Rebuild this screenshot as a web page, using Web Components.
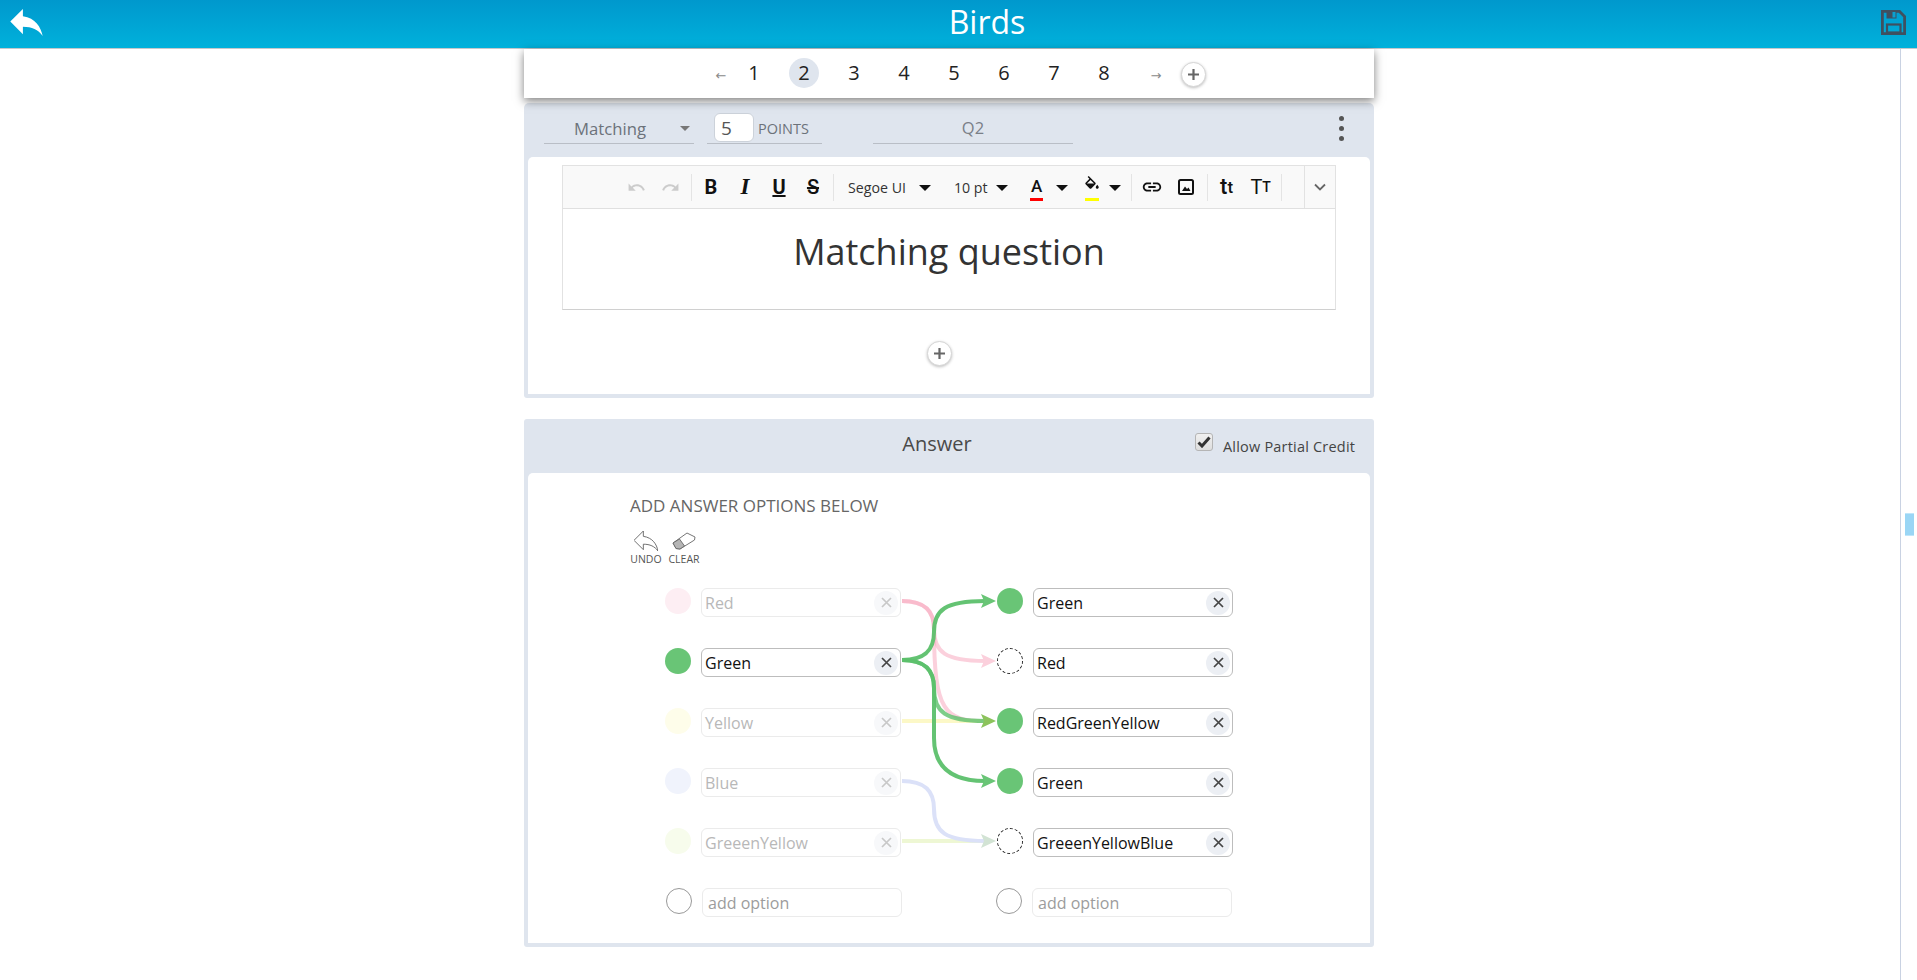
<!DOCTYPE html>
<html>
<head>
<meta charset="utf-8">
<title>Birds</title>
<style>
  html, body { margin: 0; height: 100%; overflow: hidden; background: #fff; font-family: "Open Sans", "Liberation Sans", sans-serif; }
  app-shell { height: 980px; }
</style>
</head>
<body>
<app-shell>
  <span slot="title">Birds</span>
  <page-nav></page-nav>
  <question-panel>
    <rich-toolbar></rich-toolbar>
  </question-panel>
  <answer-panel>
    <match-board></match-board>
  </answer-panel>
</app-shell>

<script>
const reply = 'M10 9V5l-7 7 7 7v-4.1c5 0 8.5 1.6 11 5.1-1-5-4-10-11-11z';

class AppShell extends HTMLElement {
  connectedCallback() {
    this.attachShadow({ mode: 'open' });
    this.shadowRoot.innerHTML = `
      <style>
        :host { display: flex; flex-direction: column; }
        header {
          height: 49px; box-sizing: border-box; flex: none; display: flex; align-items: center; justify-content: space-between;
          background: linear-gradient(#0098cd, #00b1db); border-bottom: 1px solid #c4c8cc;
          padding: 0 11px 3px 10px; position: relative;
        }
        .title { position: absolute; left: 787px; top: 0; width: 400px; text-align: center; color: #fff; font-size: 32px; line-height: 44px; }
        .body { flex: 1; display: flex; min-height: 0; }
        main { width: 850px; padding-left: 524px; padding-right: 526px; border-right: 1px solid #c9d2e2; }
        .rail { flex: 1; padding: 464px 3px 0 4px; }
        .handle { height: 21px; background: #9ad6f5; border: solid #bfe6fa; border-width: 1px 0; }
      </style>
      <header>
        <svg width="33" height="27" viewBox="3 5 18 15" fill="#fff"><path d="${reply}"/></svg>
        <div class="title"><slot name="title"></slot></div>
        <svg width="25" height="25" viewBox="0 0 25 25" fill="none" stroke="#3f5060" stroke-width="2.8">
          <path d="M1.4 1.4H18.5L23.6 6.5V23.6H1.4Z"/>
          <rect x="6" y="14.5" width="13.5" height="8" stroke-width="2.2"/>
          <rect x="5.5" y="1" width="10" height="7.5" fill="#3f5060" stroke="none"/>
          <rect x="11.5" y="2" width="3" height="5.5" fill="#0aa0d0" stroke="none"/>
        </svg>
      </header>
      <div class="body">
        <main><slot></slot></main>
        <div class="rail"><div class="handle"></div></div>
      </div>`;
  }
}

class PageNav extends HTMLElement {
  connectedCallback() {
    this.attachShadow({ mode: 'open' });
    const nums = [1, 2, 3, 4, 5, 6, 7, 8]
      .map(n => `<span class="num${n === 2 ? ' on' : ''}"><b>${n}</b></span>`).join('');
    this.shadowRoot.innerHTML = `
      <style>
        :host {
          display: flex; align-items: center; height: 49px; background: #fff; padding-left: 185px;
          box-shadow: 0 3px 9px rgba(0, 0, 0, .5); position: relative; z-index: 2; color: #222;
        }
        .arrow { width: 24px; color: #8a8a8a; font-size: 13px; text-align: center; padding-top: 4px; font-family: "DejaVu Sans", sans-serif; }
        .nums { display: flex; margin: -1px 0 0 -4px; }
        .num { width: 50px; height: 30px; display: flex; justify-content: center; }
        .num b { font-weight: 400; font-size: 20px; line-height: 30px; width: 30px; height: 30px; text-align: center; border-radius: 50%; }
        .on b { background: #dfe5ee; }
        .next { margin-left: 15px; }
        add-button { margin: 1px 0 0 13px; }
      </style>
      <span class="arrow">←</span>
      <span class="nums">${nums}</span>
      <span class="arrow next">→</span>
      <add-button></add-button>`;
  }
}

class AddButton extends HTMLElement {
  connectedCallback() {
    this.attachShadow({ mode: 'open' });
    this.shadowRoot.innerHTML = `
      <style>
        :host { display: block; width: 25px; height: 25px; flex: none; }
        div { box-sizing: border-box; width: 25px; height: 25px; border-radius: 50%; background: #fff; border: 1px solid #d6d6d6; box-shadow: 0 1px 3px rgba(0,0,0,.25); display: flex; align-items: center; justify-content: center; }
      </style>
      <div><svg width="13" height="13" viewBox="0 0 13 13" stroke="#666" stroke-width="2.2"><path d="M6.5 1V12M1 6.5H12"/></svg></div>`;
  }
}

class QuestionPanel extends HTMLElement {
  connectedCallback() {
    this.attachShadow({ mode: 'open' });
    this.shadowRoot.innerHTML = `
      <style>
        :host { display: block; margin-top: 5px; background: #dfe5ee; border-radius: 5px 5px 3px 3px; padding: 0 4px 4px; height: 295px; box-sizing: border-box; color: #6c727a; }
        .bar { height: 54px; position: relative; display: flex; }
        .field { border-bottom: 1px solid #b9bec6; height: 41px; box-sizing: border-box; margin-top: 0; display: flex; align-items: center; }
        .type { width: 150px; margin: 0 0 0 16px; padding: 10px 0 0 30px; font-size: 16.7px; position: relative; }
        .type i { position: absolute; right: 4px; top: 23px; border: 5px solid transparent; border-top: 5px solid #777; border-bottom: 0; }
        .pts { width: 115px; margin-left: 13px; padding: 10px 0 0 7px; font-size: 14.5px; gap: 4px; }
        .pts span.box { width: 40px; height: 29px; box-sizing: border-box; background: #fff; border: 1px solid #ccd2da; border-radius: 6px; color: #555; font-size: 19px; line-height: 28px; padding-left: 6px; margin-bottom: 1px; }
        .q { width: 200px; margin-left: 51px; padding-top: 8px; justify-content: center; font-size: 16.5px; color: #7a7f88; }
        .dots { position: absolute; left: 811px; top: 13px; display: flex; flex-direction: column; gap: 5px; }
        .dots i { width: 5px; height: 5px; border-radius: 50%; background: #555; }
        .card { background: #fff; border-radius: 5px 5px 0 0; height: 237px; padding: 8px 34px 0; box-sizing: border-box; }
        .editor { height: 101px; box-sizing: border-box; border: 1px solid #e2e2e2; border-top: 0; border-bottom: 1px solid #d0d0d0; text-align: center; font-size: 36px; line-height: 86px; color: #333; }
        .plus { display: flex; justify-content: center; margin: 31px 0 0 -19px; }
      </style>
      <div class="bar">
        <div class="field type">Matching<i></i></div>
        <div class="field pts"><span class="box">5</span><span>POINTS</span></div>
        <div class="field q">Q2</div>
        <div class="dots"><i></i><i></i><i></i></div>
      </div>
      <div class="card">
        <slot></slot>
        <div class="editor">Matching question</div>
        <div class="plus"><add-button></add-button></div>
      </div>`;
  }
}

class RichToolbar extends HTMLElement {
  connectedCallback() {
    this.attachShadow({ mode: 'open' });
    const icon = (d, w = 22, extra = '') => `<svg width="${w}" height="${w}" viewBox="0 0 24 24" fill="currentColor" ${extra}><path d="${d}"/></svg>`;
    const undo = 'M12.5 8c-2.65 0-5.05.99-6.9 2.6L2 7v9h9l-3.62-3.62c1.39-1.16 3.16-1.88 5.12-1.88 3.54 0 6.55 2.31 7.6 5.5l2.37-.78C21.08 11.03 17.15 8 12.5 8z';
    const link = 'M3.9 12c0-1.71 1.39-3.1 3.1-3.1h4V7H7c-2.76 0-5 2.24-5 5s2.24 5 5 5h4v-1.9H7c-1.71 0-3.1-1.39-3.1-3.1zM8 13h8v-2H8v2zm9-6h-4v1.9h4c1.71 0 3.1 1.39 3.1 3.1s-1.39 3.1-3.1 3.1h-4V17h4c2.76 0 5-2.24 5-5s-2.24-5-5-5z';
    const fill = 'M16.56 8.94L7.62 0 6.21 1.41l2.38 2.38-5.15 5.15c-.59.59-.59 1.54 0 2.12l5.5 5.5c.29.29.68.44 1.06.44s.77-.15 1.06-.44l5.5-5.5c.59-.58.59-1.53 0-2.12zM5.21 10L10 5.21 14.79 10H5.21zM19 11.5s-2 2.17-2 3.5c0 1.1.9 2 2 2s2-.9 2-2c0-1.33-2-3.5-2-3.5z';
    this.shadowRoot.innerHTML = `
      <style>
        :host { display: flex; align-items: center; height: 44px; box-sizing: border-box; background: #f9f9f9; border: 1px solid #e2e2e2; border-bottom-color: #e0e0e0; padding-left: 56px; color: #111; font-family: "Open Sans", sans-serif; position: relative; }
        .b { width: 34px; height: 34px; display: flex; align-items: center; justify-content: center; flex: none; position: relative; }
        .off { color: #ccc; }
        .sep { width: 1px; height: 27px; background: #e4e4e4; flex: none; margin: 0 3px; }
        .t { font: 700 20px/34px Roboto, sans-serif; }
        .caret { width: 0; height: 0; border: 6px solid transparent; border-top: 6px solid #111; border-bottom: 0; flex: none; }
        .txt { font-size: 14.2px; color: #333; flex: none; }
        .bar { position: absolute; left: 8px; right: 8px; bottom: 3px; height: 3px; }
        .more { position: absolute; right: 0; top: 0; bottom: 0; width: 30px; border-left: 1px solid #e2e2e2; display: flex; align-items: center; justify-content: center; }
      </style>
      <span class="b off">${icon(undo, 19)}</span>
      <span class="b off">${icon(undo, 19, 'style="transform:scaleX(-1)"')}</span>
      <span class="sep" style="margin:0 2px 0 4px"></span>
      <span class="b t">B</span>
      <span class="b t"><i style="font-family:'Liberation Serif',serif;font-size:23px">I</i></span>
      <span class="b t"><u>U</u></span>
      <span class="b t" style="font-weight:500"><s>S</s></span>
      <span class="sep" style="margin:0 0 0 3px"></span>
      <span class="txt" style="margin-left:14px">Segoe UI</span>
      <span class="caret" style="margin:1px 0 0 13px"></span>
      <span class="txt" style="margin-left:23px">10 pt</span>
      <span class="caret" style="margin:1px 0 0 8px"></span>
      <span class="b t" style="margin-left:12px;font-weight:500;font-size:17px;top:-1px">A<span class="bar" style="background:#f00;bottom:2px;left:10px;right:11px"></span></span>
      <span class="caret" style="margin:1px 0 0 2px"></span>
      <span class="b" style="margin-left:7px;top:-2px">${icon(fill, 18)}<span class="bar" style="background:#ff0;left:10px;right:10px;bottom:1px"></span></span>
      <span class="caret" style="margin:1px 0 0 0"></span>
      <span class="sep" style="margin:0 0 0 10px"></span>
      <span class="b" style="margin-left:3px">${icon(link, 22)}</span>
      <span class="b"><svg width="16" height="16" viewBox="0 0 16 16"><rect x="1" y="1" width="14" height="14" rx="1.5" fill="none" stroke="#111" stroke-width="2"/><path d="M4 12L7 7.5 9 10 10.5 8.5 12.5 12Z" fill="#111"/></svg></span>
      <span class="sep" style="margin:0 0 0 4px"></span>
      <span class="b t" style="margin-left:2px;font-size:22px;font-weight:500">t<span style="font-size:17px">t</span></span>
      <span class="b t" style="font-size:20px;font-weight:400">T<span style="font-size:14px;font-weight:500">T</span></span>
      <span class="sep" style="margin:0 0 0 3px"></span>
      <span class="more"><svg width="12" height="8" viewBox="0 0 12 8" fill="none" stroke="#666" stroke-width="1.8"><path d="M1 1.5L6 6.5 11 1.5"/></svg></span>`;
  }
}

class AnswerPanel extends HTMLElement {
  connectedCallback() {
    this.attachShadow({ mode: 'open' });
    this.shadowRoot.innerHTML = `
      <style>
        :host { display: block; margin-top: 21px; background: #dfe5ee; border-radius: 3px; padding: 0 4px 4px; color: #444; }
        .head { height: 54px; position: relative; box-sizing: border-box; padding: 9px 24px 0 0; text-align: center; font-size: 20px; line-height: 32px; color: #4a4a4a; }
        .credit { position: absolute; left: 667px; top: 14px; display: flex; font-size: 14.5px; color: #444; }
        .credit span { margin: 4px 0 0 10px; line-height: 19px; letter-spacing: .2px; }
        .check { width: 18px; height: 18px; box-sizing: border-box; background: linear-gradient(#f0f0f0, #dedede); border: 1px solid #b5b5b5; border-radius: 3px; display: flex; align-items: center; justify-content: center; }
        .card { background: #fff; border-radius: 5px 5px 0 0; height: 470px; padding: 22px 0 0 102px; box-sizing: border-box; }
        h4 { margin: 0; font-weight: 400; font-size: 17px; line-height: 22px; color: #666; }
        .tools { display: flex; gap: 6px; margin-top: 13px; font-size: 10.5px; color: #555; line-height: 14px; }
        .tools div { width: 32px; display: flex; flex-direction: column; align-items: center; }
        .tools svg { display: block; height: 22px; }
        ::slotted(match-board) { margin: 22px 0 0 35px; }
      </style>
      <div class="head">
        Answer
        <div class="credit">
          <div class="check"><svg width="14" height="12" viewBox="0 0 14 12" fill="none" stroke="#333" stroke-width="3"><path d="M1.5 6.5L5 10 12.5 1.5"/></svg></div>
          <span>Allow Partial Credit</span>
        </div>
      </div>
      <div class="card">
        <h4>ADD ANSWER OPTIONS BELOW</h4>
        <div class="tools">
          <div><svg width="24" viewBox="3 5 18 15" fill="none" stroke="#666" stroke-width=".7"><path d="${reply}"/></svg>UNDO</div>
          <div><svg width="24" viewBox="0 0 24 18" fill="none" stroke="#666" stroke-width=".9"><path d="M1 11L15 1 23 5 22.5 8 8 17 4 16.5Z"/><path d="M1 11L4 16.5 8 17 12.5 14 7.5 7Z" fill="#b5b5b5"/></svg>CLEAR</div>
        </div>
        <slot></slot>
      </div>`;
  }
}

class OptionPill extends HTMLElement {
  connectedCallback() {
    this.attachShadow({ mode: 'open' });
    const faded = this.hasAttribute('faded');
    this.shadowRoot.innerHTML = `
      <style>
        :host { display: flex; align-items: center; width: 200px; height: 29px; box-sizing: border-box; border-radius: 6px; background: #fff; border: 1px solid ${faded ? '#ebebeb' : '#bdbdbd'}; color: ${faded ? '#b8b8b8' : '#111'}; font-size: 16px; padding-left: 3px; position: relative; z-index: 1; }
        span { flex: 1; line-height: 27px; padding-top: 2px; }
        button { all: unset; width: 24px; height: 24px; border-radius: 50%; background: ${faded ? '#f7f8fa' : '#eceff4'}; display: flex; align-items: center; justify-content: center; margin: 0 2px 0 0; flex: none; }
      </style>
      <span><slot></slot></span>
      <button><svg width="11" height="11" viewBox="0 0 11 11" stroke="${faded ? '#c8c8c8' : '#444'}" stroke-width="1.7"><path d="M1 1L10 10M10 1L1 10"/></svg></button>`;
  }
}

class MatchBoard extends HTMLElement {
  connectedCallback() {
    this.attachShadow({ mode: 'open' });
    const left = [['Red', '#fdeef3'], ['Green', '#69c576', 1], ['Yellow', '#fefdea'], ['Blue', '#f0f3fc'], ['GreeenYellow', '#f7fcec']];
    const right = [['Green', 1], ['Red', 0], ['RedGreenYellow', 1], ['Green', 1], ['GreeenYellowBlue', 0]];
    const rows = left.map((l, i) => {
      const r = right[i];
      return `<div class="row">
        <i class="dot" style="background:${l[1]}"></i>
        <option-pill ${l[2] ? '' : 'faded'}>${l[0]}</option-pill>
        <i></i>
        <i class="dot ${r[1] ? 'full' : 'open'}"></i>
        <option-pill>${r[0]}</option-pill>
      </div>`;
    }).join('');
    const tip = (y, c) => `<path d="M331 ${y}L316 ${y - 7}L319 ${y}L316 ${y + 7}Z" fill="${c}"/>`;
    const up = (a, b, c, o) => `<path d="M237 ${a}C260 ${a} 269 ${a - 10} 269 ${a - 28}C269 ${b + 9} 280 ${b} 320 ${b}" stroke="${c}" opacity="${o}"/>`;
    const down = (a, b, c, o) => `<path d="M237 ${a}C260 ${a} 269 ${a + 10} 269 ${a + 28}C269 ${b - 9} 280 ${b} 320 ${b}" stroke="${c}" opacity="${o}"/>`;
    const pink = '#f7a9bf', green = '#5cc06b';
    this.shadowRoot.innerHTML = `
      <style>
        :host { display: block; position: relative; width: 568px; }
        .row { display: grid; grid-template-columns: 26px 210px 96px 26px 210px; height: 29px; margin-bottom: 31px; }
        .row.add { grid-template-columns: 26px 210px 94px 26px 210px; padding-left: 1px; }
        .dot { width: 26px; height: 26px; border-radius: 50%; box-sizing: border-box; }
        .full { background: #69c576; }
        .open { border: 1px dashed #222; }
        .empty { border: 1px solid #999; }
        option-pill { margin-left: 10px; width: 200px; }
        .slotbox { box-sizing: border-box; margin-left: 10px; width: 200px; height: 29px; border: 1px solid #ebebeb; border-radius: 6px; color: #9c9c9c; font-size: 16px; line-height: 29px; padding-left: 5px; }
        svg { position: absolute; left: 0; top: 0; pointer-events: none; }
        svg path[stroke] { fill: none; stroke-width: 4; }
      </style>
      ${rows}
      <div class="row add">
        <i class="dot empty"></i><div class="slotbox">add option</div><i></i>
        <i class="dot empty"></i><div class="slotbox">add option</div>
      </div>
      <svg width="340" height="270" viewBox="0 0 340 270">
        ${down(13, 73, pink, .55)}
        ${down(13, 133, pink, .55)}
        <path d="M237 133H320" stroke="#fbf6b4" opacity=".75"/>
        <path d="M237 253H320" stroke="#eef7d4"/>
        ${down(193, 253, '#dbe1f8', 1)}
        ${up(72, 13, green, .95)}
        ${down(72, 133, green, .8)}
        <path d="M237 72C260 72 269 82 269 100V150C269 178 285 193 320 193" stroke="${green}" opacity=".95"/>
        ${tip(13, '#69c576')}${tip(73, '#fbd0dc')}${tip(133, '#8cc35c')}${tip(193, '#69c576')}${tip(253, '#d2e3d4')}
      </svg>`;
  }
}

customElements.define('add-button', AddButton);
customElements.define('page-nav', PageNav);
customElements.define('rich-toolbar', RichToolbar);
customElements.define('question-panel', QuestionPanel);
customElements.define('option-pill', OptionPill);
customElements.define('match-board', MatchBoard);
customElements.define('answer-panel', AnswerPanel);
customElements.define('app-shell', AppShell);
</script>
</body>
</html>
